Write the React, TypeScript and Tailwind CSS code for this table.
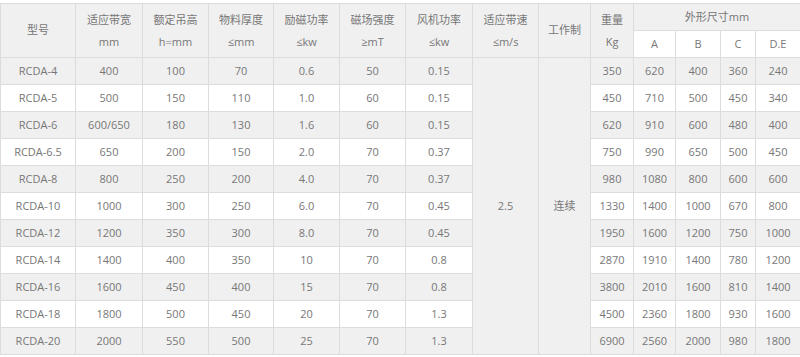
import React from "react";

const rows = [
  ["RCDA-4", "400", "100", "70", "0.6", "50", "0.15", "350", "620", "400", "360", "240"],
  ["RCDA-5", "500", "150", "110", "1.0", "60", "0.15", "450", "710", "500", "450", "340"],
  ["RCDA-6", "600/650", "180", "130", "1.6", "60", "0.15", "620", "910", "600", "480", "400"],
  ["RCDA-6.5", "650", "200", "150", "2.0", "70", "0.37", "750", "990", "650", "500", "450"],
  ["RCDA-8", "800", "250", "200", "4.0", "70", "0.37", "980", "1080", "800", "600", "600"],
  ["RCDA-10", "1000", "300", "250", "6.0", "70", "0.45", "1330", "1400", "1000", "670", "800"],
  ["RCDA-12", "1200", "350", "300", "8.0", "70", "0.45", "1950", "1600", "1200", "750", "1000"],
  ["RCDA-14", "1400", "400", "350", "10", "70", "0.8", "2870", "1910", "1400", "780", "1200"],
  ["RCDA-16", "1600", "450", "400", "15", "70", "0.8", "3800", "2010", "1600", "810", "1400"],
  ["RCDA-18", "1800", "500", "450", "20", "70", "1.3", "4500", "2360", "1800", "930", "1600"],
  ["RCDA-20", "2000", "550", "500", "25", "70", "1.3", "6900", "2560", "2000", "980", "1800"],
];

const widths = [75, 67, 66, 65, 66, 66, 67, 66, 52, 43, 42, 45, 35, 45];

const td = "border border-[#dcdcdc] text-center align-middle p-0";

export default function App() {
  return (
    <div className="w-[800px] h-[357px] bg-white pt-[3px]" style={{ fontFamily: '"Open Sans", "Noto Sans CJK SC", sans-serif' }}>
      <table className="table-fixed border-collapse w-[800px] text-[11px] text-[#777777]">
        <colgroup>
          {widths.map((w, i) => (
            <col key={i} style={{ width: w }} />
          ))}
        </colgroup>
        <thead>
          <tr className="bg-[#f0f0f0] h-[27px]">
            <td rowSpan={2} className={td}>型号</td>
            <td rowSpan={2} className={td + " leading-[22px]"}>适应带宽<br />mm</td>
            <td rowSpan={2} className={td + " leading-[22px]"}>额定吊高<br />h=mm</td>
            <td rowSpan={2} className={td + " leading-[22px]"}>物料厚度<br />≤mm</td>
            <td rowSpan={2} className={td + " leading-[22px]"}>励磁功率<br />≤kw</td>
            <td rowSpan={2} className={td + " leading-[22px]"}>磁场强度<br />≥mT</td>
            <td rowSpan={2} className={td + " leading-[22px]"}>风机功率<br />≤kw</td>
            <td rowSpan={2} className={td + " leading-[22px]"}>适应带速<br />≤m/s</td>
            <td rowSpan={2} className={td}>工作制</td>
            <td rowSpan={2} className={td + " leading-[22px]"}>重量<br />Kg</td>
            <td colSpan={4} className={td}>外形尺寸mm</td>
          </tr>
          <tr className="bg-white h-[27px]">
            <td className={td}>A</td>
            <td className={td}>B</td>
            <td className={td}>C</td>
            <td className={td}>D.E</td>
          </tr>
        </thead>
        <tbody>
          {rows.map((r, i) => (
            <tr key={i} className={(i % 2 === 0 ? "bg-[#f0f0f0]" : "bg-white") + " h-[27px]"}>
              {r.slice(0, 7).map((c, j) => (
                <td key={j} className={td}>{c}</td>
              ))}
              {i === 0 && (
                <>
                  <td rowSpan={11} className={td + " bg-[#f0f0f0]"}>2.5</td>
                  <td rowSpan={11} className={td + " bg-[#f0f0f0]"}>连续</td>
                </>
              )}
              {r.slice(7).map((c, j) => (
                <td key={"b" + j} className={td}>{c}</td>
              ))}
            </tr>
          ))}
        </tbody>
      </table>
    </div>
  );
}
